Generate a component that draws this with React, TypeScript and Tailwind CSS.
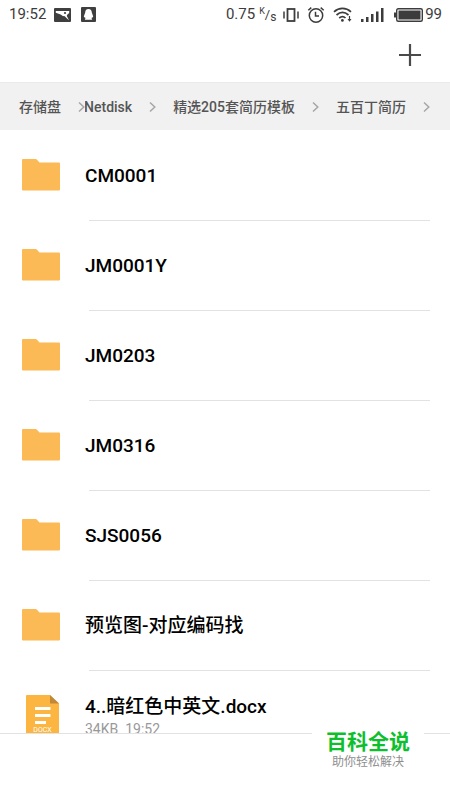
import { Fragment } from "react";

const folders = [
  "CM0001",
  "JM0001Y",
  "JM0203",
  "JM0316",
  "SJS0056",
  "预览图-对应编码找",
];

const path = ["Netdisk", "精选205套简历模板", "五百丁简历"];

function StatusBar() {
  return (
    <header className="flex h-7 shrink-0 items-center pt-px pr-2 pl-2 text-[15px] text-[#3c3c3c]">
      <span className="pl-px">19:52</span>
      <svg
        width="17"
        height="14"
        viewBox="0 0 17 14"
        className="ml-2"
        aria-hidden="true"
      >
        <rect width="17" height="14" rx="1" fill="#3f3f3f" />
        <path
          d="M1.800 3H15.200V5L13.200 6.800L12.800 8L15 12.200L12.200 9.800L10.800 8.200L8.800 8L6.600 6.400L1.800 4.800Z"
          fill="#fff"
        />
        <circle cx="11" cy="5" r="1.100" fill="#3f3f3f" />
      </svg>
      <svg
        width="15"
        height="15"
        viewBox="0 0 15 15"
        className="ml-2.5"
        aria-hidden="true"
      >
        <rect width="15" height="15" rx="1" fill="#3f3f3f" />
        <path
          d="M7.500 2C5.200 2 4.200 3.600 4.200 5.600L2.900 9.300C2.800 10.500 3.400 10.700 4 10.200L4.400 11.300L3.800 12.800H11.200L10.600 11.300L11 10.200C11.600 10.700 12.200 10.500 12.100 9.300L10.800 5.600C10.800 3.600 9.800 2 7.500 2Z"
          fill="#fff"
        />
      </svg>

      <span className="ml-auto">0.75</span>
      <span className="ml-1 flex h-4 w-4 items-center text-[13px]">
        <span className="self-start text-[9px] leading-none">K</span>
        <span>/</span>
        <span className="self-end text-xs leading-none">s</span>
      </span>
      <svg
        width="16"
        height="14"
        viewBox="0 0 16 14"
        className="ml-2"
        fill="none"
        stroke="currentColor"
        aria-hidden="true"
      >
        <rect x="4.500" y="1" width="7" height="12" strokeWidth="1.800" />
        <path d="M1 3.500V10.500M15 3.500V10.500" strokeWidth="1.500" />
      </svg>
      <svg
        width="18"
        height="18"
        viewBox="0 0 18 18"
        className="ml-2"
        fill="none"
        stroke="currentColor"
        strokeWidth="1.500"
        aria-hidden="true"
      >
        <circle cx="9" cy="9.500" r="6.700" />
        <path d="M8.500 5.800V10H12M1.300 4.200L4.300 1.600M16.700 4.200L13.700 1.600" />
      </svg>
      <svg
        width="20"
        height="16"
        viewBox="0 0 20 16"
        className="ml-2"
        fill="none"
        stroke="currentColor"
        strokeWidth="1.700"
        aria-hidden="true"
      >
        <path d="M1 4.800C6 .300 13 .300 18 4.800M3.500 8C7.500 4.500 11.500 4.500 15.500 8M6.200 11C8.500 9 10.500 9 12.500 11" />
        <circle cx="9.400" cy="13.400" r="1.400" fill="currentColor" stroke="none" />
        <path d="M16.500 9V13" strokeWidth="1.200" />
        <path d="M14.500 12H18.500L16.500 14.800Z" fill="currentColor" stroke="none" />
      </svg>
      <svg
        width="23"
        height="14"
        viewBox="0 0 23 14"
        className="ml-2"
        fill="currentColor"
        aria-hidden="true"
      >
        <path d="M0 11H2.500V14H0ZM5 9H7.500V14H5ZM10 6H12.500V14H10ZM15 3.500H17.500V14H15ZM20 0H22.500V14H20Z" />
      </svg>
      <svg
        width="29"
        height="14"
        viewBox="0 0 29 14"
        className="ml-2.5"
        aria-hidden="true"
      >
        <rect
          x="2.700"
          y=".700"
          width="25.600"
          height="12.600"
          rx="1.500"
          fill="none"
          stroke="currentColor"
          strokeWidth="1.400"
        />
        <rect x="4.500" y="2.500" width="22" height="9" fill="currentColor" />
        <rect y="4.500" width="2.500" height="5" fill="currentColor" />
      </svg>
      <span className="ml-0.5">99</span>
    </header>
  );
}

function Chevron() {
  return (
    <svg
      width="7"
      height="12"
      viewBox="0 0 7 12"
      className="shrink-0"
      fill="none"
      stroke="#a6a6a6"
      strokeWidth="1.500"
      aria-hidden="true"
    >
      <path d="M1 1.500L5.800 6L1 10.500" />
    </svg>
  );
}

function Breadcrumb() {
  return (
    <nav className="flex h-12 shrink-0 items-center border-t border-[#e9e9e9] bg-[#f1f1f1] pr-5 pl-[19px] text-sm font-medium text-[#555]">
      <button type="button" className="mr-[17px] shrink-0">
        存储盘
      </button>
      <Chevron />
      <div className="flex min-w-0 flex-1 items-center justify-end gap-[17px] overflow-hidden">
        {path.map((name) => (
          <Fragment key={name}>
            <button type="button" className="shrink-0 whitespace-nowrap">
              {name}
            </button>
            <Chevron />
          </Fragment>
        ))}
      </div>
    </nav>
  );
}

function FolderIcon() {
  return (
    <svg width="38" height="32" viewBox="0 0 38 32" aria-hidden="true">
      <path
        d="M0 1Q0 0 1 0H13.500Q14.500 0 15.200 1L17.500 3.500H37Q38 3.500 38 4.500V30.500Q38 31.500 37 31.500H1Q0 31.500 0 30.500Z"
        fill="#fbba56"
      />
    </svg>
  );
}

function DocIcon() {
  return (
    <svg width="33" height="42" viewBox="0 0 33 42" aria-hidden="true">
      <path d="M1 0H24L33 8.500V42H0V1Q0 0 1 0Z" fill="#fbb540" />
      <path d="M24 0L33 8.500H24Z" fill="#c2883a" />
      <path
        d="M9 13.500H24.500M9 20.500H24.500M9 27.500H20"
        stroke="#fff"
        strokeWidth="3"
      />
      <text
        x="16.500"
        y="37"
        textAnchor="middle"
        fontSize="7"
        fontWeight="400"
        fill="#fff"
      >
        DOCX
      </text>
    </svg>
  );
}

export default function App() {
  return (
    <div className="relative flex h-screen flex-col overflow-hidden bg-white font-['Roboto','Noto_Sans_CJK_SC',sans-serif]">
      <StatusBar />

      <div className="flex h-[54px] shrink-0 items-center justify-end pr-7">
        <button type="button" aria-label="新建">
          <svg
            width="24"
            height="24"
            viewBox="0 0 24 24"
            stroke="#4a4a4a"
            strokeWidth="2.200"
          >
            <path d="M12 1V23M1 12H23" />
          </svg>
        </button>
      </div>

      <Breadcrumb />

      <ul className="min-h-0 flex-1 overflow-hidden pt-px text-[19px] font-medium text-black">
        {folders.map((name) => (
          <li key={name} className="flex h-[90px] pl-[22px]">
            <span className="pt-7">
              <FolderIcon />
            </span>
            <span className="relative ml-[25px] flex flex-1 items-center after:absolute after:right-5 after:bottom-0 after:left-1 after:h-px after:bg-[#e2e2e2]">
              {name}
            </span>
          </li>
        ))}
        <li className="flex h-[90px] items-start pt-6 pl-[26px]">
          <DocIcon />
          <div className="ml-[26px]">
            <p className="leading-6">4..暗红色中英文.docx</p>
            <p className="text-sm leading-5 font-normal text-[#999]">
              34KB&nbsp; 19:52
            </p>
          </div>
        </li>
      </ul>

      <footer className="h-[67px] shrink-0 border-t border-[#e2e2e2] bg-white" />

      <div className="absolute right-[26px] bottom-7 w-28 bg-white pb-1 text-center">
        <p className="text-[21px] leading-7 font-bold text-[#0dbf2d]">百科全说</p>
        <p className="text-xs leading-3 text-[#8e8e8e]">助你轻松解决</p>
      </div>
    </div>
  );
}
